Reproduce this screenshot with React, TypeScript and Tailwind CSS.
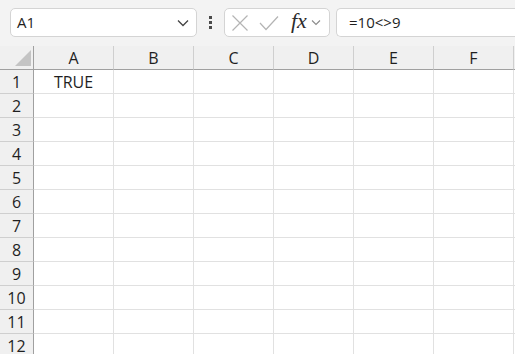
import React from "react";

const cols = ["A", "B", "C", "D", "E", "F", ""];
const rows = Array.from({ length: 12 }, (_, i) => i + 1);

export default function App() {
  return (
    <div className="w-[515px] h-[354px] overflow-hidden bg-white font-['Segoe_UI','Open_Sans',sans-serif] text-[#1f1f1f]">
      {/* Formula bar */}
      <div className="h-[46px] bg-[#f3f3f3] flex items-start pt-[8px] pl-[10px]">
        <div className="w-[187px] h-[29px] bg-white border border-[#d4d4d4] rounded-[5px] flex items-center justify-between pl-[6px] pr-[6px]">
          <span className="text-[15px] leading-none">A1</span>
          <svg width="12" height="8" viewBox="0 0 12 8" className="mr-[1px]">
            <path d="M1 1.5 L6 6.5 L11 1.5" fill="none" stroke="#444" strokeWidth="1.3" />
          </svg>
        </div>
        <div className="w-[27px] h-[29px] flex flex-col items-center justify-center gap-[2px]">
          <div className="w-[3px] h-[3px] bg-[#4a4a4a]" />
          <div className="w-[3px] h-[3px] bg-[#4a4a4a]" />
          <div className="w-[3px] h-[3px] bg-[#4a4a4a]" />
        </div>
        <div className="w-[106px] h-[29px] bg-white border border-[#d4d4d4] rounded-[5px] flex items-center">
          <svg width="18" height="18" viewBox="0 0 18 18" className="ml-[6px]">
            <path d="M1.5 1.5 L16.5 16.5 M16.5 1.5 L1.5 16.5" fill="none" stroke="#b4b4b4" strokeWidth="1.2" />
          </svg>
          <svg width="20" height="16" viewBox="0 0 20 16" className="ml-[10px]">
            <path d="M1 8 L7 14.5 L19 1.5" fill="none" stroke="#b4b4b4" strokeWidth="1.2" />
          </svg>
          <span className="ml-[12px] font-['Liberation_Serif',serif] italic text-[22px] leading-none text-[#2b2b2b] -mt-[3px]">fx</span>
          <svg width="10" height="7" viewBox="0 0 10 7" className="ml-[4px]">
            <path d="M1 1.5 L5 5.5 L9 1.5" fill="none" stroke="#8a8a8a" strokeWidth="1.1" />
          </svg>
        </div>
        <div className="ml-[6px] flex-1 h-[29px] bg-white border border-[#d4d4d4] border-r-0 rounded-l-[5px] flex items-center pl-[12px]">
          <span className="text-[15px] leading-none">=10&lt;&gt;9</span>
        </div>
      </div>

      {/* Grid */}
      <div className="grid grid-cols-[34px_repeat(7,80px)]">
        {/* Header row */}
        <div className="h-[24px] bg-[#f0f0f0] border-r border-b border-[#a0a0a0] relative">
          <svg width="16" height="16" viewBox="0 0 16 16" className="absolute right-[2px] bottom-[3px]">
            <path d="M16 0 L16 16 L0 16 Z" fill="#c4c4c4" />
          </svg>
        </div>
        {cols.map((c, i) => (
          <div
            key={"h" + i}
            className="h-[24px] bg-[#f0f0f0] border-r border-r-[#cfcfcf] border-b border-b-[#a0a0a0] flex items-center justify-center text-[16px] leading-none"
          >
            {c}
          </div>
        ))}
        {rows.map((r) => (
          <React.Fragment key={r}>
            <div className="h-[24px] bg-[#f0f0f0] border-r border-r-[#a0a0a0] border-b border-b-[#cfcfcf] flex items-center justify-center text-[16px] leading-none">
              {r}
            </div>
            {cols.map((c, i) => (
              <div
                key={r + "-" + i}
                className="h-[24px] border-r border-b border-[#e1e1e1] flex items-center justify-center text-[16px] leading-none"
              >
                {r === 1 && i === 0 ? "TRUE" : ""}
              </div>
            ))}
          </React.Fragment>
        ))}
      </div>
    </div>
  );
}
